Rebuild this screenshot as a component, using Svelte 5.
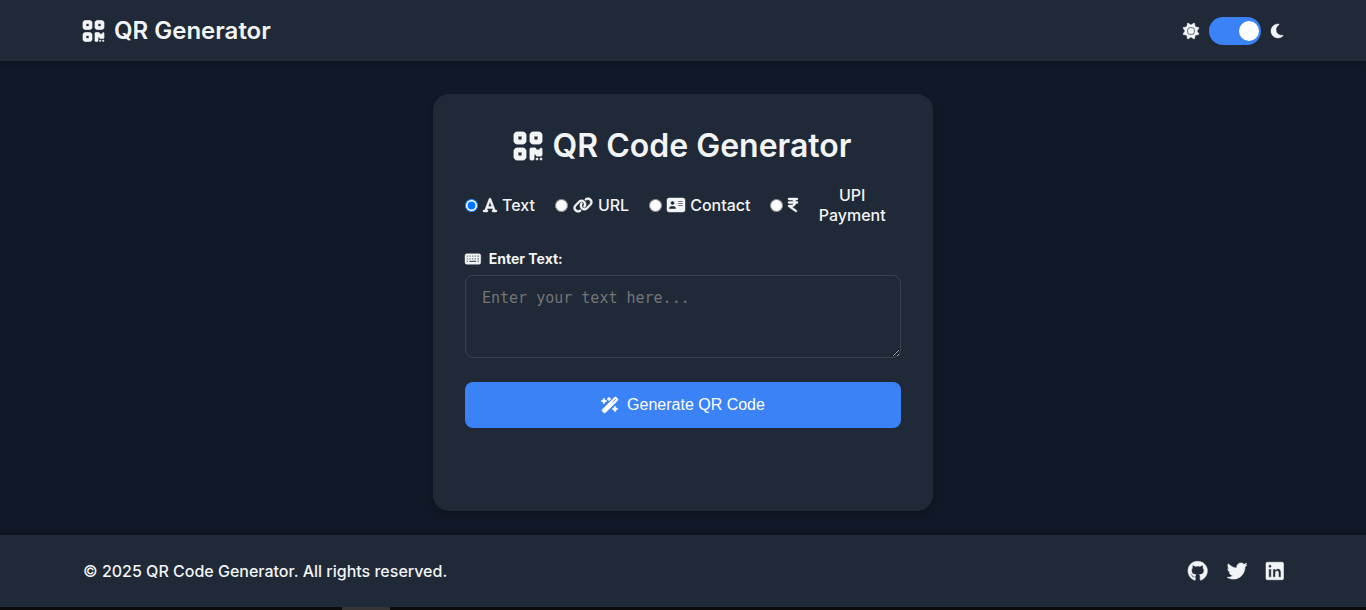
<script>
  let dark = $state(true);
  let kind = $state('text');
  let text = $state('');

  const icons = {
    qr: [448, 'M0 80C0 53.5 21.5 32 48 32h96c26.5 0 48 21.5 48 48v96c0 26.5-21.5 48-48 48H48c-26.5 0-48-21.5-48-48V80zM64 96v64h64V96H64zM0 336c0-26.5 21.5-48 48-48h96c26.5 0 48 21.5 48 48v96c0 26.5-21.5 48-48 48H48c-26.5 0-48-21.5-48-48V336zm64 16v64h64V352H64zM304 32h96c26.5 0 48 21.5 48 48v96c0 26.5-21.5 48-48 48H304c-26.5 0-48-21.5-48-48V80c0-26.5 21.5-48 48-48zm80 64H320v64h64V96zM256 304c0-8.8 7.2-16 16-16h64c8.8 0 16 7.2 16 16s7.2 16 16 16h32c8.8 0 16-7.2 16-16s7.2-16 16-16s16 7.2 16 16v96c0 8.8-7.2 16-16 16H368c-8.8 0-16-7.2-16-16s-7.2-16-16-16s-16 7.2-16 16v64c0 8.8-7.2 16-16 16H272c-8.8 0-16-7.2-16-16V304zM368 480a16 16 0 1 1 0-32 16 16 0 1 1 0 32zm64 0a16 16 0 1 1 0-32 16 16 0 1 1 0 32z'],
    sun: [512, 'M361.5 1.2c5 2.1 8.6 6.6 9.6 11.9L391 121l107.9 19.8c5.3 1 9.8 4.6 11.9 9.6s1.5 10.7-1.6 15.2L446.9 256l62.3 90.3c3.1 4.5 3.7 10.2 1.6 15.2s-6.6 8.6-11.9 9.6L391 391 371.1 498.9c-1 5.3-4.6 9.8-9.6 11.9s-10.7 1.5-15.2-1.6L256 446.9l-90.3 62.3c-4.5 3.1-10.2 3.7-15.2 1.6s-8.6-6.6-9.6-11.9L121 391 13.1 371.1c-5.3-1-9.8-4.6-11.9-9.6s-1.5-10.7 1.6-15.2L65.1 256 2.8 165.7c-3.1-4.5-3.7-10.2-1.6-15.2s6.6-8.6 11.9-9.6L121 121 140.9 13.1c1-5.3 4.6-9.8 9.6-11.9s10.7-1.5 15.2 1.6L256 65.1 346.3 2.8c4.5-3.1 10.2-3.7 15.2-1.6zM160 256a96 96 0 1 1 192 0 96 96 0 1 1 -192 0zm224 0a128 128 0 1 0 -256 0 128 128 0 1 0 256 0z'],
    moon: [384, 'M223.5 32C100 32 0 132.3 0 256S100 480 223.5 480c60.6 0 115.5-24.2 155.8-63.4c5-4.9 6.3-12.5 3.1-18.7s-10.1-9.7-17-8.5c-9.8 1.7-19.8 2.6-30.1 2.6c-96.9 0-175.5-78.8-175.5-176c0-65.8 36-123.1 89.3-153.3c6.1-3.5 9.2-10.5 7.7-17.3s-7.3-11.9-14.3-12.5c-6.3-.5-12.6-.8-19-.8z'],
    font: [448, 'M254 52.8C249.3 40.3 237.3 32 224 32s-25.3 8.3-30 20.8L57.8 416H32c-17.7 0-32 14.3-32 32s14.3 32 32 32h96c17.7 0 32-14.3 32-32s-14.3-32-32-32h-1.8l18-48H303.8l18 48H320c-17.7 0-32 14.3-32 32s14.3 32 32 32h96c17.7 0 32-14.3 32-32s-14.3-32-32-32H390.2L254 52.8zM279.8 304H168.2L224 155.1 279.8 304z'],
    link: [640, 'M579.8 267.7c56.5-56.5 56.5-148 0-204.5c-50-50-128.8-56.5-186.3-15.4l-1.6 1.1c-14.4 10.3-17.7 30.3-7.4 44.6s30.3 17.7 44.6 7.4l1.6-1.1c32.1-22.9 76-19.3 103.8 8.6c31.5 31.5 31.5 82.5 0 114L422.3 334.8c-31.5 31.5-82.5 31.5-114 0c-27.9-27.9-31.5-71.8-8.6-103.8l1.1-1.6c10.3-14.4 6.9-34.4-7.4-44.6s-34.4-6.9-44.6 7.4l-1.1 1.6C206.5 251.2 213 330 263 380c56.5 56.5 148 56.5 204.5 0L579.8 267.7zM60.2 244.3c-56.5 56.5-56.5 148 0 204.5c50 50 128.8 56.5 186.3 15.4l1.6-1.1c14.4-10.3 17.7-30.3 7.4-44.6s-30.3-17.7-44.6-7.4l-1.6 1.1c-32.1 22.9-76 19.3-103.8-8.6C74 372 74 321 105.5 289.5L217.7 177.2c31.5-31.5 82.5-31.5 114 0c27.9 27.9 31.5 71.8 8.6 103.9l-1.1 1.6c-10.3 14.4-6.9 34.4 7.4 44.6s34.4 6.9 44.6-7.4l1.1-1.6C433.5 260.8 427 182 377 132c-56.5-56.5-148-56.5-204.5 0L60.2 244.3z'],
    card: [576, 'M64 32C28.7 32 0 60.7 0 96V416c0 35.3 28.7 64 64 64H512c35.3 0 64-28.7 64-64V96c0-35.3-28.7-64-64-64H64zm80 256h64c44.2 0 80 35.8 80 80c0 8.8-7.2 16-16 16H80c-8.8 0-16-7.2-16-16c0-44.2 35.8-80 80-80zm-32-96a64 64 0 1 1 128 0 64 64 0 1 1 -128 0zm256-64H496c8.8 0 16 7.2 16 16s-7.2 16-16 16H368c-8.8 0-16-7.2-16-16s7.2-16 16-16zm0 64H496c8.8 0 16 7.2 16 16s-7.2 16-16 16H368c-8.8 0-16-7.2-16-16s7.2-16 16-16zm0 64H496c8.8 0 16 7.2 16 16s-7.2 16-16 16H368c-8.8 0-16-7.2-16-16s7.2-16 16-16z'],
    rupee: [320, 'M0 64C0 46.3 14.3 32 32 32H96h16H288c17.7 0 32 14.3 32 32s-14.3 32-32 32H231.8c9.6 14.4 16.7 30.6 20.7 48H288c17.7 0 32 14.3 32 32s-14.3 32-32 32H252.4c-13.2 58.3-61.9 103.2-122.2 110.9L274.6 422c14.4 10.3 17.7 30.3 7.4 44.6s-30.3 17.7-44.6 7.4L13.4 314C2.1 306-2.7 291.5 1.5 278.2S18.1 256 32 256h80c32.8 0 61-19.7 73.3-48H32c-17.7 0-32-14.3-32-32s14.3-32 32-32H185.3C173 115.7 144.8 96 112 96H96 32C14.3 96 0 81.7 0 64z'],
    keyboard: [576, 'M64 64C28.7 64 0 92.7 0 128V384c0 35.3 28.7 64 64 64H512c35.3 0 64-28.7 64-64V128c0-35.3-28.7-64-64-64H64zM64 128h48v48H64zM64 224h48v48H64zM64 320h48v48H64zM160 128h48v48h-48zM160 224h48v48h-48zM160 320h256v48H160zM256 128h48v48h-48zM256 224h48v48h-48zM352 128h48v48h-48zM352 224h48v48h-48zM448 128h64v48h-64zM448 224h64v48h-64zM464 320h48v48h-48z'],
    wand: [576, 'M234.7 42.7L197 56.8c-3 1.1-5 4-5 7.2s2 6.1 5 7.2l37.7 14.1L248.8 123c1.1 3 4 5 7.2 5s6.1-2 7.2-5l14.1-37.7L315 71.2c3-1.1 5-4 5-7.2s-2-6.1-5-7.2L277.3 42.7 263.2 5c-1.1-3-4-5-7.2-5s-6.1 2-7.2 5L234.7 42.7zM46.1 395.4c-18.7 18.7-18.7 49.1 0 67.9l34.6 34.6c18.7 18.7 49.1 18.7 67.9 0L529.9 116.5c18.7-18.7 18.7-49.1 0-67.9L495.3 14.1c-18.7-18.7-49.1-18.7-67.9 0L46.1 395.4zM484.6 82.6l-105 105-23.3-23.3 105-105 23.3 23.3zM7.5 117.2C3 118.9 0 123.2 0 128s3 9.1 7.5 10.8L64 160l21.2 56.5c1.7 4.5 6 7.5 10.8 7.5s9.1-3 10.8-7.5L128 160l56.5-21.2c4.5-1.7 7.5-6 7.5-10.8s-3-9.1-7.5-10.8L128 96 106.8 39.5C105.1 35 100.8 32 96 32s-9.1 3-10.8 7.5L64 96 7.5 117.2zm352 256c-4.5 1.7-7.5 6-7.5 10.8s3 9.1 7.5 10.8L416 416l21.2 56.5c1.7 4.5 6 7.5 10.8 7.5s9.1-3 10.8-7.5L480 416l56.5-21.2c4.5-1.7 7.5-6 7.5-10.8s-3-9.1-7.5-10.8L480 352l-21.2-56.5c-1.7-4.5-6-7.5-10.8-7.5s-9.1 3-10.8 7.5L416 352l-56.5 21.2z'],
    github: [496, 'M165.9 397.4c0 2-2.3 3.6-5.2 3.6-3.3.3-5.6-1.3-5.6-3.6 0-2 2.3-3.6 5.2-3.6 3-.3 5.6 1.3 5.6 3.6zm-31.1-4.5c-.7 2 1.3 4.3 4.3 4.9 2.6 1 5.6 0 6.2-2s-1.3-4.3-4.3-5.2c-2.6-.7-5.5.3-6.2 2.3zm44.2-1.7c-2.9.7-4.9 2.6-4.6 4.9.3 2 2.9 3.3 5.9 2.6 2.9-.7 4.9-2.6 4.6-4.6-.3-1.9-3-3.2-5.9-2.9zM244.8 8C106.1 8 0 113.3 0 252c0 110.9 69.8 205.8 169.5 239.2 12.8 2.3 17.3-5.6 17.3-12.1 0-6.2-.3-40.4-.3-61.4 0 0-70 15-84.7-29.8 0 0-11.4-29.1-27.8-36.6 0 0-22.9-15.7 1.6-15.4 0 0 24.9 2 38.6 25.8 21.9 38.6 58.6 27.5 72.9 20.9 2.3-16 8.8-27.1 16-33.7-55.9-6.2-112.3-14.3-112.3-110.5 0-27.5 7.6-41.3 23.6-58.9-2.6-6.5-11.1-33.3 2.6-67.9 20.9-6.5 69 27 69 27 20-5.6 41.5-8.5 62.8-8.5s42.8 2.9 62.8 8.5c0 0 48.1-33.6 69-27 13.7 34.7 5.2 61.4 2.6 67.9 16 17.7 25.8 31.5 25.8 58.9 0 96.5-58.9 104.2-114.8 110.5 9.2 7.9 17 22.9 17 46.4 0 33.7-.3 75.4-.3 83.6 0 6.5 4.6 14.4 17.3 12.1C428.2 457.8 496 362.9 496 252 496 113.3 383.5 8 244.8 8z'],
    twitter: [512, 'M459.37 151.716c.325 4.548.325 9.097.325 13.645 0 138.72-105.583 298.558-298.558 298.558-59.452 0-114.68-17.219-161.137-47.106 8.447.974 16.568 1.299 25.34 1.299 49.055 0 94.213-16.568 130.274-44.832-46.132-.975-84.792-31.188-98.112-72.772 6.498.974 12.995 1.624 19.818 1.624 9.421 0 18.843-1.3 27.614-3.573-48.081-9.747-84.143-51.98-84.143-102.985v-1.299c13.969 7.797 30.214 12.67 47.431 13.319-28.264-18.843-46.781-51.005-46.781-87.391 0-19.492 5.197-37.36 14.294-52.954 51.655 63.675 129.3 105.258 216.365 109.807-1.624-7.797-2.599-15.918-2.599-24.04 0-57.828 46.782-104.934 104.934-104.934 30.213 0 57.502 12.67 76.67 33.137 23.715-4.548 46.456-13.32 66.599-25.34-7.798 24.366-24.366 44.833-46.132 57.827 21.117-2.273 41.584-8.122 60.426-16.243-14.292 20.791-32.161 39.308-52.628 54.253z'],
    linkedin: [448, 'M416 32H31.9C14.3 32 0 46.5 0 64.3v383.4C0 465.5 14.3 480 31.9 480H416c17.6 0 32-14.5 32-32.3V64.3c0-17.8-14.4-32.3-32-32.3zM135.4 416H69V202.2h66.5V416zm-33.2-243c-21.3 0-38.5-17.3-38.5-38.5S80.9 96 102.2 96c21.2 0 38.5 17.3 38.5 38.5 0 21.3-17.2 38.5-38.5 38.5zm282.1 243h-66.4V312c0-24.8-.5-56.7-34.5-56.7-34.6 0-39.9 27-39.9 54.9V416h-66.4V202.2h63.7v29.2h.9c8.9-16.8 30.6-34.5 62.9-34.5 67.2 0 79.7 44.3 79.7 101.9V416z']
  };

  const kinds = [
    { id: 'text', icon: 'font', label: 'Text' },
    { id: 'url', icon: 'link', label: 'URL' },
    { id: 'contact', icon: 'card', label: 'Contact' },
    { id: 'upi', icon: 'rupee', label: 'UPI Payment' }
  ];
</script>

{#snippet icon(name)}
  <svg class="icon" viewBox="0 0 {icons[name][0]} 512" fill="currentColor" fill-rule="evenodd" stroke="currentColor" aria-hidden="true">
    <path d={icons[name][1]} />
  </svg>
{/snippet}

<div class="page">
  <header>
    <div class="container">
      <div class="brand">{@render icon('qr')}<span>QR Generator</span></div>
      <div class="theme">
        {@render icon('sun')}
        <input type="checkbox" role="switch" aria-label="Dark mode" bind:checked={dark} />
        {@render icon('moon')}
      </div>
    </div>
  </header>

  <main>
    <section class="card">
      <h1>{@render icon('qr')}<span>QR Code Generator</span></h1>
      <form onsubmit={(e) => e.preventDefault()}>
        <div class="kinds" role="radiogroup" aria-label="Content type">
          {#each kinds as k}
            <label class:wide={k.id === 'upi'}>
              <input type="radio" name="kind" value={k.id} bind:group={kind} />
              {@render icon(k.icon)}
              <span>{k.label}</span>
            </label>
          {/each}
        </div>
        <label class="field" for="content">{@render icon('keyboard')}<span>Enter Text:</span></label>
        <textarea id="content" placeholder="Enter your text here..." bind:value={text}></textarea>
        <button type="submit">{@render icon('wand')}<span>Generate QR Code</span></button>
      </form>
    </section>
  </main>

  <footer>
    <div class="container">
      <p>© 2025 QR Code Generator. All rights reserved.</p>
      <nav aria-label="Social">
        <a href="#github" aria-label="GitHub">{@render icon('github')}</a>
        <a href="#twitter" aria-label="Twitter">{@render icon('twitter')}</a>
        <a href="#linkedin" aria-label="LinkedIn">{@render icon('linkedin')}</a>
      </nav>
    </div>
  </footer>
  <div class="edge"><span></span></div>
</div>

<style>
  :global(body) {
    margin: 0;
    background: #111827;
  }
  .page {
    box-sizing: border-box;
    min-height: 100vh;
    display: flex;
    flex-direction: column;
    font-family: Inter, sans-serif;
    font-size: 16px;
    font-weight: 500;
    line-height: 20px;
    color: #f3f4f6;
  }
  .icon {
    height: 1em;
    flex: none;
    display: block;
    overflow: visible;
    stroke-width: 14;
  }
  header,
  footer {
    background: #1f2937;
  }
  header {
    padding: 16px;
    box-shadow: 0 2px 4px rgba(0, 0, 0, 0.2);
  }
  footer {
    padding: 24px 16px;
    box-shadow: 0 -2px 4px rgba(0, 0, 0, 0.2);
  }
  .container {
    max-width: 1200px;
    margin: 0 auto;
    display: flex;
    align-items: center;
    justify-content: space-between;
  }
  .brand {
    display: flex;
    align-items: center;
    gap: 10px;
    font-size: 24px;
    line-height: 29px;
    font-weight: 600;
  }
  .theme {
    display: flex;
    align-items: center;
    gap: 10px;
  }
  .theme input {
    appearance: none;
    box-sizing: border-box;
    width: 52px;
    height: 28px;
    margin: 0;
    padding: 4px;
    border-radius: 14px;
    background: #9ca3af;
    display: flex;
    cursor: pointer;
  }
  .theme input::before {
    content: '';
    width: 20px;
    height: 20px;
    border-radius: 50%;
    background: #fff;
  }
  .theme input:checked {
    background: #3b82f6;
    justify-content: flex-end;
    padding-right: 2px;
  }
  main {
    flex: 1;
    padding: 33px 16px 24px;
  }
  .card {
    box-sizing: border-box;
    max-width: 500px;
    margin: 0 auto;
    padding: 32px 32px 83px;
    border-radius: 16px;
    background: #1f2937;
    box-shadow: 0 4px 6px rgba(0, 0, 0, 0.2);
  }
  h1 {
    display: flex;
    align-items: center;
    justify-content: center;
    gap: 10px;
    margin: 0 0 20px;
    font-size: 32px;
    line-height: 39px;
    font-weight: 600;
  }
  .kinds {
    display: flex;
    align-items: center;
    gap: 20px;
    margin-bottom: 24px;
  }
  .kinds label {
    display: flex;
    align-items: center;
    gap: 5px;
  }
  .kinds input {
    margin: 0;
  }
  .kinds .wide {
    flex: 1;
  }
  .wide span {
    flex: 1;
    width: min-content;
    padding: 0 12px;
    text-align: center;
  }
  .field {
    display: flex;
    align-items: center;
    gap: 8px;
    margin-bottom: 6px;
    font-size: 14px;
    font-weight: 700;
  }
  textarea {
    box-sizing: border-box;
    display: block;
    width: 100%;
    height: 83px;
    margin: 0 0 24px;
    padding: 12px 16px;
    border: 1px solid #374151;
    border-radius: 8px;
    background: #1f2937;
    color: #f3f4f6;
    font: 15px/20px 'DejaVu Sans Mono', monospace;
    resize: vertical;
  }
  textarea::placeholder {
    color: #757575;
  }
  button {
    width: 100%;
    height: 46px;
    padding: 0;
    border: 0;
    border-radius: 8px;
    background: #3b82f6;
    color: #fff;
    display: flex;
    align-items: center;
    justify-content: center;
    gap: 8px;
    font: 16px 'Liberation Sans', Arial, sans-serif;
    cursor: pointer;
  }
  footer p {
    margin: 0;
  }
  nav {
    display: flex;
    gap: 19px;
    font-size: 20px;
  }
  nav a {
    color: inherit;
    line-height: 24px;
    padding: 2px 0;
  }
  .edge {
    height: 3px;
    padding-left: 25%;
    background: #0b0b0c;
  }
  .edge span {
    display: block;
    width: 48px;
    height: 3px;
    background: #373435;
  }
</style>
